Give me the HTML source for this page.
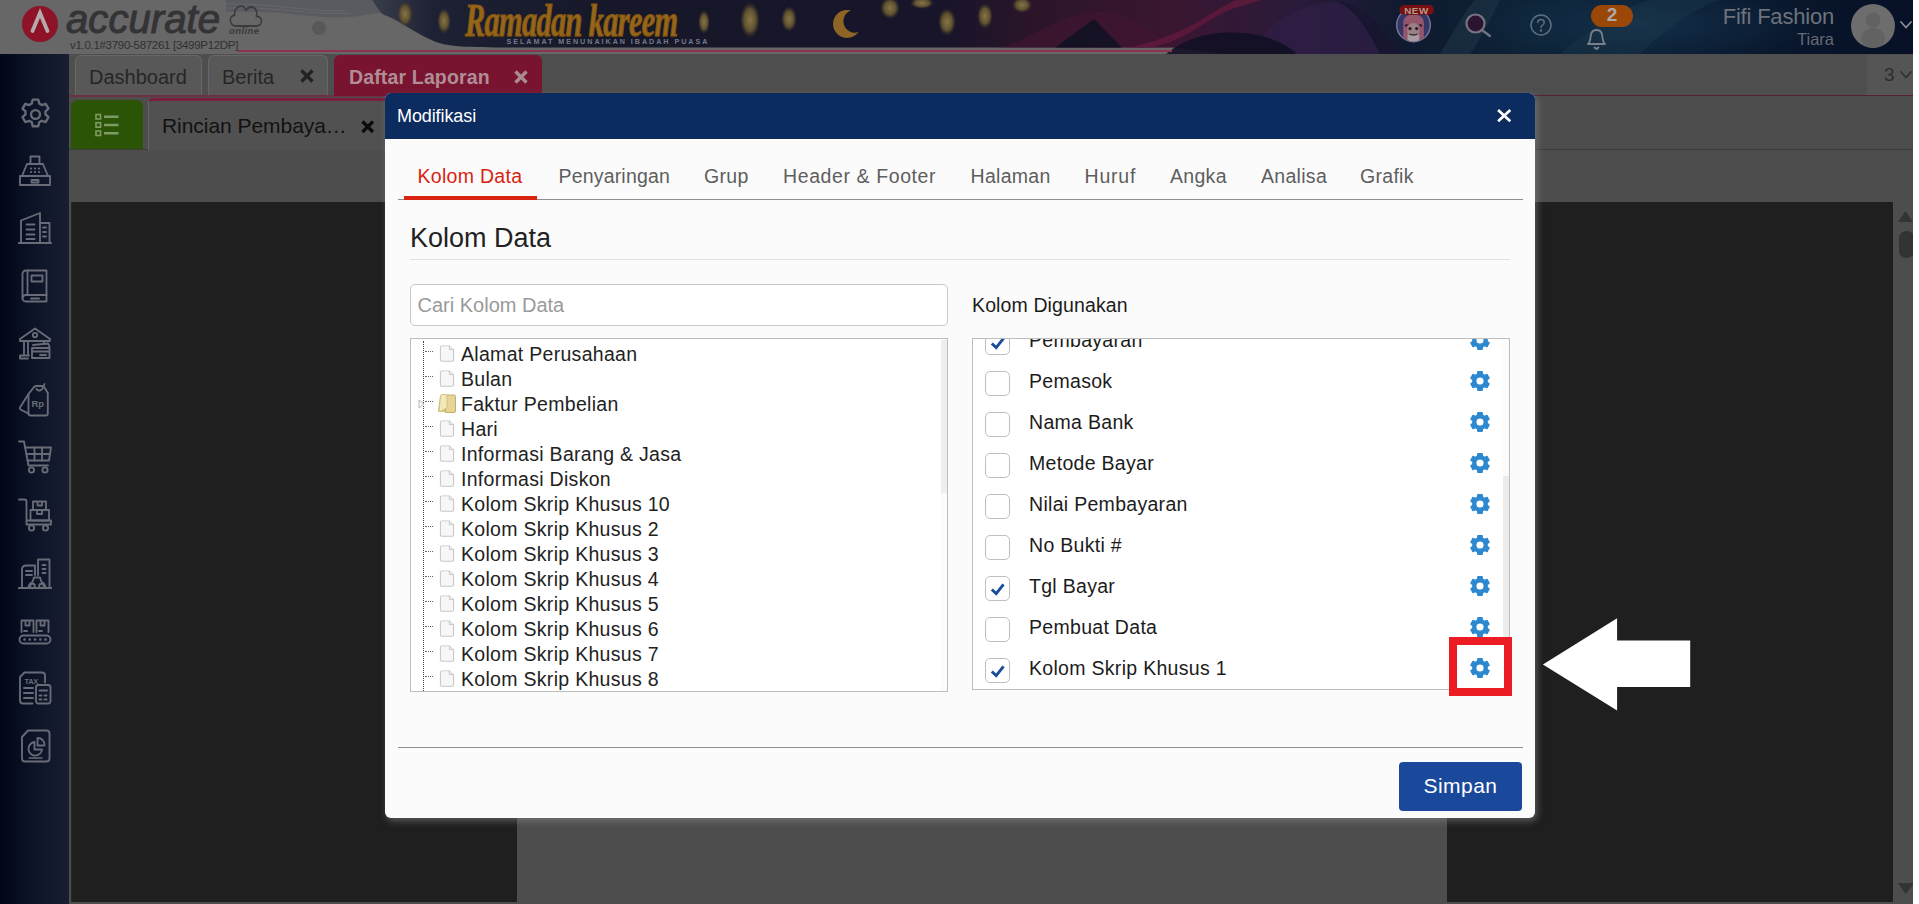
<!DOCTYPE html>
<html lang="id">
<head>
<meta charset="utf-8">
<title>Accurate Online - Modifikasi</title>
<style>
*{box-sizing:border-box;margin:0;padding:0}
html,body{width:1919px;height:904px;overflow:hidden;background:#4d4d4d;font-family:"Liberation Sans",sans-serif;}
.abs{position:absolute}
#root{position:relative;width:1919px;height:904px;overflow:hidden;background:#4d4d4d}
/* ---------- top header ---------- */
#hdr{left:0;top:0;width:1913px;height:54px;background:#676767;overflow:hidden}
#whitestrip{left:1913px;top:0;width:6px;height:904px;background:#fff}
/* ---------- sidebar ---------- */
#side{left:0;top:54px;width:69px;height:850px;background:linear-gradient(90deg,#010718 0%,#0b1326 45%,#191e31 100%)}
#side svg{position:absolute;left:18px;width:34px;height:34px;fill:none;stroke:#696c76;stroke-width:1.85;stroke-linecap:round;stroke-linejoin:round}
/* ---------- tab bar ---------- */
#tabbar{left:69px;top:54px;width:1844px;height:42px;background:#4e4e4e}
.tab{position:absolute;top:55px;height:40px;border:1px solid #676767;border-bottom:none;border-radius:6px 6px 0 0;background:#585858;color:#262626;font-size:20px;line-height:42px;white-space:nowrap}
/* ---------- modal ---------- */
#modal{left:385px;top:93px;width:1150px;height:725px;background:#fbfbfb;border-radius:6px;box-shadow:2px 3px 7px rgba(150,150,150,.5);overflow:hidden}
#mhead{left:0;top:0;width:1150px;height:46px;background:#0c2b5e}
.mt{position:absolute;top:72px;font-size:19.5px;color:#5e5e5e;white-space:nowrap;letter-spacing:.3px}
.ti{position:absolute;left:76px;font-size:19.5px;color:#222;white-space:nowrap;letter-spacing:.3px;line-height:27px;height:25px}
.ri{position:absolute;left:644px;font-size:19.5px;color:#1c1c1c;white-space:nowrap;letter-spacing:.3px;line-height:25px;height:25px}
.cb{position:absolute;left:600px;width:25px;height:25px;border:1px solid #bfbfbf;border-radius:5px;background:#fff}
.gear{position:absolute;left:1084px;width:22px;height:22px}
.pg{position:absolute;left:54px;width:16px;height:17.5px}
</style>
</head>
<body>
<div id="root">
<!--HEADER-S-->
<div id="hdr" class="abs">
<svg class="abs" style="left:0;top:0" width="1913" height="54" viewBox="0 0 1913 54">
  <defs>
    <linearGradient id="gnavy" x1="0" y1="0" x2="1" y2="0">
      <stop offset="0" stop-color="#3a3d4a"/>
      <stop offset="0.04" stop-color="#1d2133"/>
      <stop offset="0.15" stop-color="#161829"/>
      <stop offset="0.37" stop-color="#18142a"/>
      <stop offset="0.43" stop-color="#2b1529"/>
      <stop offset="0.52" stop-color="#3a1631"/>
      <stop offset="0.60" stop-color="#2a1a3a"/>
      <stop offset="0.67" stop-color="#0f1a30"/>
      <stop offset="0.75" stop-color="#0d2236"/>
      <stop offset="0.85" stop-color="#0a1b30"/>
      <stop offset="1" stop-color="#071026"/>
    </linearGradient>
    <linearGradient id="gmag" x1="0" y1="0" x2="1" y2="0">
      <stop offset="0" stop-color="#5a1634" stop-opacity="0.0"/>
      <stop offset="0.25" stop-color="#5e1738" stop-opacity="0.9"/>
      <stop offset="0.7" stop-color="#4a1a48" stop-opacity="0.9"/>
      <stop offset="1" stop-color="#2a1c48" stop-opacity="0.2"/>
    </linearGradient>
    <radialGradient id="gteal" cx="0.5" cy="0.5" r="0.5"><stop offset="0" stop-color="#1c4261" stop-opacity=".5"/><stop offset="0.6" stop-color="#163652" stop-opacity=".25"/><stop offset="1" stop-color="#0d2236" stop-opacity="0"/></radialGradient>
    <radialGradient id="glan" cx="0.5" cy="0.5" r="0.5">
      <stop offset="0" stop-color="#877446"/>
      <stop offset="0.6" stop-color="#5e5030"/>
      <stop offset="1" stop-color="#3a3426" stop-opacity="0"/>
    </radialGradient>
  </defs>
  <rect x="0" y="0" width="1913" height="54" fill="#676767"/>
  <!-- subtle gray wave band at top-left -->
  <path d="M226,0 L400,0 L400,12 C375,12 362,17 340,17.500 C310,18 280,10 226,12 Z" fill="#5a5b60"/>
  <path d="M226,4 C270,3 310,12 345,11 M226,8 C270,6 310,15 350,13.500" fill="none" stroke="#66676c" stroke-width="1"/>
  <!-- navy banner -->
  <path d="M372,0 C378,8 380,13 384,15 C400,20 412,32 436,42 C450,47 470,47.500 520,47.500 L1172,47.500 C1190,49 1210,54 1240,54 L1913,54 L1913,0 Z" fill="url(#gnavy)"/>
  <!-- magenta waves -->
  <path d="M1000,47.500 C1030,40 1060,14 1095,12 C1130,10 1150,30 1172,47.500 Z" fill="#431632" opacity=".6"/>
  <path d="M1055,47.500 L1094,19 L1122,47.500 Z" fill="#0f1022" opacity=".85"/>
  <path d="M1150,47.500 C1190,40 1205,18 1235,8 L1262,0 L1236,0 C1212,10 1190,34 1130,47.500 Z" fill="#661a3e" opacity=".75"/>
  <path d="M1166,54 C1190,34 1225,28 1262,36 C1280,40 1292,48 1300,54 Z" fill="#120f24" opacity=".9"/>
  <path d="M1262,36 C1282,14 1310,2 1338,2 C1366,2 1386,32 1402,54 L1296,54 C1288,46 1276,40 1262,36 Z" fill="#2f1f46" opacity=".7"/>
  <path d="M1338,2 C1366,2 1386,32 1402,54 L1380,54 C1370,34 1356,10 1338,2 Z" fill="#0d1228" opacity=".6"/>
  <!-- teal waves on right -->
  <ellipse cx="1640" cy="24" rx="200" ry="46" fill="url(#gteal)"/>
  <path d="M1560,54 C1590,30 1620,8 1650,0 L1720,0 C1690,10 1660,34 1640,54 Z" fill="#1e3a4c" opacity="0.4"/>
  <path d="M1440,54 C1455,30 1465,10 1475,0 L1500,0 C1490,20 1480,40 1470,54 Z" fill="#22384a" opacity="0.5"/>
  <!-- lanterns -->
  <g fill="url(#glan)">
    <ellipse cx="405" cy="14" rx="8" ry="13"/><ellipse cx="444" cy="21" rx="7" ry="13"/>
    <ellipse cx="750" cy="20" rx="10" ry="18"/><ellipse cx="789" cy="19" rx="8" ry="13"/>
    <ellipse cx="890" cy="8" rx="10" ry="11"/><ellipse cx="947" cy="22" rx="9" ry="14"/>
    <ellipse cx="985" cy="16" rx="8" ry="13"/><ellipse cx="922" cy="3" rx="12" ry="6"/>
    <ellipse cx="704" cy="22" rx="6" ry="12"/><ellipse cx="1022" cy="5" rx="10" ry="8"/>
  </g>
  <!-- crescent -->
  <path d="M851,10.500 A14,14 0 1 0 858.500,32 A11,11 0 1 1 851,10.500 Z" fill="#8f6526"/>
  <!-- bottom light strip + red line -->
  <rect x="238" y="50" width="934" height="2" fill="#8c3350"/>
  <!-- small gray dot -->
  <circle cx="319" cy="28" r="7" fill="#585858"/>
</svg>
<!-- logo -->
<svg class="abs" style="left:20px;top:4px" width="40" height="40" viewBox="0 0 40 40">
  <circle cx="20" cy="20" r="18" fill="#8e1228"/>
  <path d="M12.5,27 L20,9 L27.5,27" fill="none" stroke="#b5aaac" stroke-width="3.8" stroke-linecap="round" stroke-linejoin="miter"/>
</svg>
<div id="acc" class="abs" style="left:66px;top:-8px;font-size:41.5px;font-style:italic;font-weight:normal;color:#343436;-webkit-text-stroke:1.1px #343436;letter-spacing:0px;line-height:54px;transform:scaleX(.968);transform-origin:0 0;white-space:nowrap">accurate</div>
<svg class="abs" style="left:227px;top:3px" width="38" height="24" viewBox="0 2.200 40 19.600" preserveAspectRatio="none" fill="none" stroke="#3b3b3d" stroke-width="1.6">
  <path d="M9,21 C3,21 1,13 8,12 C7,5 17,2 20,8 C25,3 33,6 31,13 C38,13 38,21 31,21 Z"/>
</svg>
<div class="abs" style="left:229px;top:25px;font-size:9.5px;font-style:italic;font-weight:bold;color:#3a3a3c;letter-spacing:.4px">online</div>
<div class="abs" style="left:70px;top:38px;font-size:11.5px;color:#303030;letter-spacing:-.3px;line-height:14px">v1.0.1#3790-587261 [3499P12DP]</div>
<!-- banner text -->
<div class="abs" style="left:465px;top:-3.5px;font-family:'Liberation Serif',serif;font-size:46px;font-style:italic;font-weight:bold;color:#966619;letter-spacing:-1px;line-height:48px;-webkit-text-stroke:1.2px #855715;text-shadow:0 1px 1px #3a2608;transform:scaleX(.66);transform-origin:0 0;white-space:nowrap">Ramadan kareem</div>
<div class="abs" style="left:506.500px;top:36.500px;white-space:nowrap;font-size:7.2px;font-weight:bold;color:#747989;letter-spacing:1.95px;line-height:10px">SELAMAT MENUNAIKAN IBADAH PUASA</div>
<!-- right icons -->
<svg class="abs" style="left:1390px;top:0px" width="50" height="46" viewBox="0 0 50 46">
  <defs><clipPath id="msc"><circle cx="23.500" cy="25" r="16.200"/></clipPath></defs>
  <circle cx="23.500" cy="25" r="16.800" fill="#34376a" stroke="#7c7a92" stroke-width="1.400"/>
  <g clip-path="url(#msc)">
    <path d="M13.200,44 V24 C13.200,17 17,14.500 23.500,14.500 C30,14.500 33.900,17 33.900,24 V44 Z" fill="#93566b"/>
    <ellipse cx="23.400" cy="30.600" rx="6.200" ry="7.600" fill="#9a8186"/>
    <path d="M17.500,34.500 Q23.400,37 29.300,34.500 V44 H17.500 Z" fill="#a79da0"/>
    <circle cx="20" cy="28.600" r="1.600" fill="#2a1c2c"/><circle cx="26.700" cy="28.600" r="1.600" fill="#2a1c2c"/>
    <path d="M19.600,34 Q23.400,35.800 27.400,34" fill="none" stroke="#2a1c2c" stroke-width="1.300"/>
    <path d="M15,26 L17.500,24.500 M32,26 L29.500,24.500" stroke="#1d1830" stroke-width="1.600"/>
  </g>
  <rect x="9.500" y="5" width="34.500" height="9.800" rx="4.900" fill="#7a0f12"/>
  <text x="26.500" y="13.500" font-family="Liberation Sans, sans-serif" font-weight="bold" font-size="9.800" fill="#b39a86" text-anchor="middle" letter-spacing=".6">NEW</text>
</svg>
<svg class="abs" style="left:1462px;top:10px" width="32" height="32" viewBox="0 0 32 32" fill="none" stroke="#767383" stroke-width="2.200" stroke-linecap="round">
  <circle cx="13.500" cy="13.500" r="9" fill="#2a1430"/><path d="M20.500,20.500 L28,26"/>
</svg>
<svg class="abs" style="left:1528px;top:12px" width="26" height="26" viewBox="0 0 26 26" fill="none" stroke="#5f6f7c" stroke-width="1.500" stroke-linecap="round">
  <circle cx="13" cy="13" r="10"/><path d="M9.800,10.500 C9.800,6.500 16.200,6.500 16.200,10.500 C16.200,13 13,13 13,15.500"/><circle cx="13" cy="18.600" r=".5" fill="#5f6f7c"/>
</svg>
<div class="abs" style="left:1591px;top:5px;width:42px;height:22px;border-radius:11px;background:#9a4708"></div>
<div class="abs" style="left:1591px;top:4px;width:42px;height:22px;text-align:center;font-size:19px;font-weight:bold;color:#b0a9a4;line-height:22px">2</div>
<svg class="abs" style="left:1585px;top:27px" width="24" height="24" viewBox="0 0 24 24" fill="none" stroke="#78808c" stroke-width="1.800" stroke-linecap="round" stroke-linejoin="round">
  <path d="M3,17 C6,15 5,9 6.500,6 C8,2 15,2 16.500,6 C18,9 17,15 20,17 Z"/><path d="M9.500,20.500 L11.500,22 L13.500,20.500"/>
</svg>
<div class="abs" style="right:79px;top:4px;font-size:22px;color:#6c737c;white-space:nowrap;line-height:26px;letter-spacing:-.2px">Fifi Fashion</div>
<div class="abs" style="right:79px;top:29px;font-size:16.500px;color:#646a72;white-space:nowrap;line-height:20px">Tiara</div>
<svg class="abs" style="left:1850px;top:3px" width="46" height="46" viewBox="0 0 46 46">
  <defs><clipPath id="avc"><circle cx="23" cy="23" r="22"/></clipPath></defs>
  <circle cx="23" cy="23" r="22" fill="#6d6d6d"/>
  <g clip-path="url(#avc)" fill="#626262"><circle cx="23" cy="17" r="7.500"/><ellipse cx="23" cy="35" rx="12" ry="10"/></g>
</svg>
<svg class="abs" style="left:1899px;top:19px" width="14" height="12" viewBox="0 0 14 12" fill="none" stroke="#8a8f98" stroke-width="1.800" stroke-linecap="round" stroke-linejoin="round"><path d="M2,3 L7,8.500 L12,3"/></svg>
</div>
<div id="whitestrip" class="abs"></div>
<!--HEADER-E-->
<!--TABBAR-S-->
<div id="tabbar" class="abs"></div>
<div class="abs" style="left:69px;top:96px;width:1844px;height:54px;background:#4d4d4d"></div>
<div class="abs" style="left:69px;top:150px;width:1844px;height:52px;background:#4d4d4d"></div>
<div class="abs" style="left:69px;top:95px;width:472px;height:2px;background:#6e3040"></div>
<div class="abs" style="left:541px;top:95px;width:1372px;height:1px;background:#58222c"></div>
<div class="abs" style="left:69px;top:149px;width:1844px;height:1px;background:#3c3c3c"></div>
<div class="tab" style="left:75px;width:127px;padding-left:13px">Dashboard</div>
<div class="tab" style="left:208px;width:120px;padding-left:13px">Berita</div>
<svg class="abs" style="left:299px;top:68px" width="16" height="16" viewBox="0 0 16 16" stroke="#222" stroke-width="3.400" stroke-linecap="butt"><path d="M2.500,2.500 L13.500,13.500 M13.500,2.500 L2.500,13.500"/></svg>
<div class="tab" style="left:334px;width:208px;padding-left:14px;background:#78142f;border-color:#78142f;color:#b08d97;font-weight:bold;font-size:19.5px;letter-spacing:.15px;top:55px;height:41px">Daftar Laporan</div>
<svg class="abs" style="left:513px;top:69px" width="16" height="16" viewBox="0 0 16 16" stroke="#ab8b93" stroke-width="3.400"><path d="M2.500,2.500 L13.500,13.500 M13.500,2.500 L2.500,13.500"/></svg>
<div class="abs" style="left:1867px;top:55px;width:46px;height:40px;background:#555"></div>
<div class="abs" style="left:1884px;top:64px;font-size:19px;color:#2d2d2d;line-height:22px">3</div>
<svg class="abs" style="left:1899px;top:69px" width="14" height="12" viewBox="0 0 14 12" fill="none" stroke="#2f2f2f" stroke-width="1.700" stroke-linecap="round" stroke-linejoin="round"><path d="M2,3 L7,8.500 L12,3"/></svg>
<!-- green list button -->
<div class="abs" style="left:71px;top:100px;width:72px;height:49px;background:#2b5407;border-radius:6px 6px 0 0"></div>
<svg class="abs" style="left:94px;top:112px" width="28" height="26" viewBox="0 0 28 26" fill="none" stroke="#7f9a66" stroke-width="1.600">
  <rect x="2" y="2.500" width="4.500" height="4.500"/><rect x="2" y="10.700" width="4.500" height="4.500"/><rect x="2" y="19" width="4.500" height="4.500"/>
  <path d="M10,4.800 H24.500 M10,13 H24.500 M10,21.200 H24.500" stroke-width="2.400"/>
</svg>
<!-- sub tab -->
<div class="abs" style="left:148px;top:98px;width:240px;height:52px;background:#515151;border-top:3px solid #7b1d3c;border-left:1px solid #666;border-radius:5px 0 0 0"></div>
<div class="abs" style="left:162px;top:112px;font-size:21px;color:#111;line-height:28px;white-space:nowrap;letter-spacing:-.05px">Rincian Pembaya…</div>
<svg class="abs" style="left:360px;top:119px" width="16" height="16" viewBox="0 0 16 16" stroke="#0b0b0b" stroke-width="3.200"><path d="M2.500,2.500 L13,13 M13,2.500 L2.500,13"/></svg>
<!-- viewer -->
<div class="abs" style="left:69px;top:202px;width:1824px;height:700px;background:#1f1f1f"></div>
<div class="abs" style="left:69px;top:202px;width:3px;height:700px;background:#262626"></div>
<div class="abs" style="left:517px;top:202px;width:930px;height:700px;background:#4d4d4d"></div>
<div class="abs" style="left:1893px;top:202px;width:20px;height:702px;background:#4d4d4d"></div>
<svg class="abs" style="left:1893px;top:202px" width="20" height="700" viewBox="0 0 20 700">
  <path d="M5,20 L12.500,9 L20,20 Z" fill="#343434"/>
  <rect x="6" y="29" width="15" height="27" rx="7" fill="#333"/>
  <path d="M5,681 L20,681 L20,683 L12.500,692 Z" fill="#343434"/>
</svg>
<!--TABBAR-E-->
<!--CONTENT-->
<!--SIDEBAR-S-->
<div id="side" class="abs">
<!-- gear -->
<svg style="top:42.500px;left:17.500px;width:35px;height:35px" viewBox="0 0 34 34"><g stroke-width="2.300"><path d="M14.300,2.500 h5.400 l.9,3.900 l2.500,1.400 l3.800,-1.200 l2.700,4.700 l-2.900,2.700 v2.900 l2.900,2.700 l-2.700,4.700 l-3.800,-1.200 l-2.500,1.400 l-.9,3.900 h-5.400 l-.9,-3.900 l-2.500,-1.400 l-3.800,1.200 l-2.700,-4.700 l2.900,-2.700 v-2.900 l-2.900,-2.700 l2.700,-4.700 l3.800,1.200 l2.500,-1.400 z"/><circle cx="17" cy="17" r="4.300"/></g></svg>
<!-- fax -->
<svg style="top:100px" viewBox="0 0 34 34"><path d="M12.500,10 V2.500 h9 V10"/><path d="M9,10 h16 l5,12 H4 z"/><path d="M2,22 h30 v9 H2 z"/><path d="M13.500,26 h7 v2.500 h-7 z"/><path d="M13,14.500 h.1 M17,14.500 h.1 M21,14.500 h.1 M13,18 h.1 M17,18 h.1 M21,18 h.1" stroke-width="2.200"/></svg>
<!-- building -->
<svg style="top:157px" viewBox="0 0 34 34"><path d="M3,31 V9.500 L22,2 V31"/><path d="M22,12 h9.500 V31"/><path d="M1,32 H33" stroke-width="2.200"/><path d="M8.500,13.500 h8 M8.500,18.500 h8 M8.500,23.500 h8 M8.500,28 h8 M25,16.500 h3 M25,21 h3 M25,25.500 h3"/></svg>
<!-- book -->
<svg style="top:215px" viewBox="0 0 34 34"><path d="M8,1.500 H28.500 V32.500 H8 C5.500,32.500 4.500,31 4.500,29 V5 C4.500,3 5.500,1.500 8,1.500 Z"/><path d="M9.500,1.500 V26 M4.500,29 C4.500,27 6,26 8,26 H28.500"/><path d="M13.500,6.500 h11 v6 h-11 z"/><path d="M13,29.500 h8" stroke-width="2"/></svg>
<!-- bank -->
<svg style="top:272px" viewBox="0 0 34 34"><path d="M2,13 L17,2.500 L32,13 V15 H2 Z"/><circle cx="17" cy="9" r="2.200"/><path d="M6,15.500 V28 M10,15.500 V28 M26,15.500 V18 M2,32 V29.500 H11 M2,32.500 H10"/><path d="M15,19 l15,-1.500 l1.500,3"/><path d="M14,22 h17.500 v10 H14 z M14,25.500 h17.500 M22,29 h6"/></svg>
<!-- tag Rp -->
<svg style="top:329px" viewBox="0 0 34 34"><path d="M10.500,11 L16,4 Q17,3 18.500,3 H24 Q25.500,3 26.500,4.500 L29.800,10 V30.500 Q29.800,32.500 27.800,32.500 H12.500 Q10.500,32.500 10.500,30.500 Z"/><path d="M10.500,11 L2,24.500 Q1.500,26 3,26.800 L10.500,30.600"/><path d="M18.500,6 C20,8.500 24,8 25,4.500 L26.500,1"/><text x="13.500" y="24" font-family="Liberation Sans, sans-serif" font-size="9.500" font-weight="bold" fill="#696c76" stroke="none">Rp</text></svg>
<!-- cart -->
<svg style="top:386px" viewBox="0 0 34 34"><path d="M1,1.500 h5 L10.500,25.500 H30"/><path d="M7,7.500 H33 L31,20.500 H9.500"/><path d="M8.500,14 H32 M16.500,7.500 V20.500 M24,7.500 V20.500"/><circle cx="13.500" cy="30" r="2.600"/><circle cx="27" cy="30" r="2.600"/></svg>
<!-- trolley -->
<svg style="top:444px" viewBox="0 0 34 34"><path d="M1,1.500 h5.500 c1.500,0 2,1 2,2.500 V26.500 H33 V22.500 H8.500"/><path d="M15,3.500 h13 v8.500 h-13 z M19.500,3.500 v4 h4.500 v-4"/><path d="M12.500,12 h18.500 v10.500 h-18.500 z M19,12 v4 h5 v-4"/><circle cx="13.500" cy="30" r="2.600"/><circle cx="27.500" cy="30" r="2.600"/></svg>
<!-- factory -->
<svg style="top:503px" viewBox="0 0 34 34"><path d="M1,31 H34" stroke-width="2.200"/><path d="M4,31 V12.500 C4,10 6,8.500 8.500,8.500 H17 V18"/><path d="M20,18 V2.500 H31.500 V31"/><path d="M8,14 h6 M8,18 h6 M24.500,8 h3 M24.500,12 h3 M24.500,16 h3"/><path d="M10.500,31 c0,-3 1.500,-5 4,-6 l1.500,-4.500 h6 l1.500,4.500 c2.500,1 4,3 4,6"/><circle cx="14.500" cy="29" r="2.300"/><circle cx="23.500" cy="29" r="2.300"/></svg>
<!-- conveyor -->
<svg style="top:561px" viewBox="0 0 34 34"><path d="M3.500,17 V5.500 H15.500 V17 M7.500,5.500 v5 h4 v-5 M6,16 h3"/><path d="M18.500,17 V5.500 H30.500 V17 M22.500,5.500 v5 h4 v-5 M21,16 h3"/><rect x="1.500" y="20.500" width="31" height="8" rx="4"/><path d="M6.500,24.500 h.1 M11.700,24.500 h.1 M17,24.500 h.1 M22.300,24.500 h.1 M27.500,24.500 h.1" stroke-width="2.600"/></svg>
<!-- tax -->
<svg style="top:617px" viewBox="0 0 34 34"><path d="M14.500,32.500 H5 C3,32.500 2,31.500 2,29.500 V6 L6.500,1.500 H24 C26,1.500 27,2.500 27,4.500 V11.500"/><text x="6.500" y="13" font-family="Liberation Sans, sans-serif" font-size="7.500" font-weight="bold" fill="#696c76" stroke="none" letter-spacing="-.3">TAX</text><path d="M6,17 h9 M6,22 h9 M6,27 h9" stroke-width="2"/><rect x="18" y="14" width="14.500" height="18.500" rx="2.500"/><path d="M21.500,19.500 h7.500 M21.500,24.500 h2 M26.500,24.500 h2 M21.500,28.500 h2 M26.500,28.500 h2"/></svg>
<!-- report -->
<svg style="top:675px" viewBox="0 0 34 34"><path d="M10,1.500 H28.500 C30.500,1.500 31.500,2.500 31.500,4.500 V29.500 C31.500,31.500 30.500,32.500 28.500,32.500 H7 C5,32.500 4,31.500 4,29.500 V8 Z"/><path d="M16.500,13 A6.800,6.800 0 1 0 24,20.500 H16.500 Z"/><path d="M19.500,9 A6.800,6.800 0 0 1 26.500,16.500 H19.500 Z"/><path d="M11,29 h13" stroke-width="1.400"/></svg>
</div>
<div class="abs" style="left:69px;top:202px;width:2px;height:702px;background:#4d4d4d"></div>
<div class="abs" style="left:69px;top:902px;width:1844px;height:2px;background:#4d4d4d"></div>
<!--SIDEBAR-E-->
<!--MODAL-S-->
<div id="modal" class="abs">
<div id="mhead" class="abs"></div>
<div class="abs" style="left:12px;top:11px;font-size:18px;color:#fff;line-height:24px;letter-spacing:-.1px">Modifikasi</div>
<svg class="abs" style="left:1111px;top:15px" width="16" height="16" viewBox="0 0 16 16" stroke="#fff" stroke-width="2.700" stroke-linecap="butt"><path d="M2.100,1.900 L14.300,13.300 M14.300,1.900 L2.100,13.300"/></svg>
<div class="mt" style="left:32.5px;color:#d8230f">Kolom Data</div>
<div class="mt" style="left:173.5px;letter-spacing:.18px">Penyaringan</div>
<div class="mt" style="left:319px">Grup</div>
<div class="mt" style="left:398px;letter-spacing:.6px">Header &amp; Footer</div>
<div class="mt" style="left:585.5px">Halaman</div>
<div class="mt" style="left:699.5px;letter-spacing:.8px">Huruf</div>
<div class="mt" style="left:785px">Angka</div>
<div class="mt" style="left:876px">Analisa</div>
<div class="mt" style="left:975px">Grafik</div>
<div class="abs" style="left:13px;top:106px;width:1125px;height:1px;background:#8f8f8f"></div>
<div class="abs" style="left:19px;top:103px;width:133px;height:4px;background:#d8230f"></div>
<div class="abs" style="left:25px;top:128px;font-size:27px;color:#222;line-height:34px;white-space:nowrap">Kolom Data</div>
<div class="abs" style="left:25px;top:166px;width:1100px;height:1px;background:#e2e2e2"></div>
<div class="abs" style="left:25px;top:191px;width:538px;height:42px;border:1px solid #c8c8c8;border-radius:5px;background:#fff"></div>
<div class="abs" style="left:32.5px;top:199px;font-size:20px;color:#9a9a9a;line-height:26px;white-space:nowrap">Cari Kolom Data</div>
<div class="abs" style="left:25px;top:245px;width:538px;height:354px;border:1px solid #bdbdbd;background:#fff;overflow:hidden">
<div class="abs" style="left:12px;top:2px;width:0;height:350px;border-left:1.5px dotted #444"></div>
<div class="abs" style="left:530px;top:0;width:7px;height:352px;background:#fbfbfb"></div>
<div class="abs" style="left:530px;top:1px;width:6px;height:153px;background:#eeeeee"></div>
</div>
<div class="abs" style="left:40px;top:258.2px;width:8px;height:0;border-top:1px dotted #666"></div>
<svg class="pg" style="top:251.8px" viewBox="0 0 17 21" preserveAspectRatio="none"><path d="M3,1 H11 L15.500,5.500 V18 Q15.500,19.500 14,19.500 H3 Q1.500,19.500 1.500,18 V2.500 Q1.500,1 3,1 Z" fill="#f7f7f7" stroke="#c6c6c6" stroke-width="1.100"/><path d="M11,1 V5.500 H15.500" fill="#ececec" stroke="#c6c6c6" stroke-width="1"/></svg>
<div class="ti" style="top:248.2px">Alamat Perusahaan</div>
<div class="abs" style="left:40px;top:283.2px;width:8px;height:0;border-top:1px dotted #666"></div>
<svg class="pg" style="top:276.8px" viewBox="0 0 17 21" preserveAspectRatio="none"><path d="M3,1 H11 L15.500,5.500 V18 Q15.500,19.500 14,19.500 H3 Q1.500,19.500 1.500,18 V2.500 Q1.500,1 3,1 Z" fill="#f7f7f7" stroke="#c6c6c6" stroke-width="1.100"/><path d="M11,1 V5.500 H15.500" fill="#ececec" stroke="#c6c6c6" stroke-width="1"/></svg>
<div class="ti" style="top:273.2px">Bulan</div>
<div class="abs" style="left:40px;top:308.2px;width:8px;height:0;border-top:1px dotted #666"></div>
<svg class="abs" style="left:33px;top:305.7px" width="8" height="10" viewBox="0 0 8 10"><path d="M1,1 L6,5 L1,9 Z" fill="#fff" stroke="#b5b5b5" stroke-width="1"/></svg>
<svg class="abs" style="left:52px;top:299.7px" width="20" height="21" viewBox="0 0 20 21"><path d="M1,17 L3,3 Q3.500,1.500 5,1.500 H9 V19 H2 Q.8,19 1,17 Z" fill="#d6c47c"/><path d="M8.500,3.500 Q8.500,2 10,2 H17 Q18.500,2 18.500,3.500 V18 Q18.500,19.500 17,19.500 H8.500 Z" fill="#e6d596" stroke="#bca95e" stroke-width=".9"/><path d="M3.500,3 Q4,1.500 5.500,1.500 H9 Q10,1.500 10,3 V15 L2,19 Z" fill="#f2e9bd" stroke="#c9b872" stroke-width=".7"/></svg>
<div class="ti" style="top:298.2px">Faktur Pembelian</div>
<div class="abs" style="left:40px;top:333.2px;width:8px;height:0;border-top:1px dotted #666"></div>
<svg class="pg" style="top:326.8px" viewBox="0 0 17 21" preserveAspectRatio="none"><path d="M3,1 H11 L15.500,5.500 V18 Q15.500,19.500 14,19.500 H3 Q1.500,19.500 1.500,18 V2.500 Q1.500,1 3,1 Z" fill="#f7f7f7" stroke="#c6c6c6" stroke-width="1.100"/><path d="M11,1 V5.500 H15.500" fill="#ececec" stroke="#c6c6c6" stroke-width="1"/></svg>
<div class="ti" style="top:323.2px">Hari</div>
<div class="abs" style="left:40px;top:358.2px;width:8px;height:0;border-top:1px dotted #666"></div>
<svg class="pg" style="top:351.8px" viewBox="0 0 17 21" preserveAspectRatio="none"><path d="M3,1 H11 L15.500,5.500 V18 Q15.500,19.500 14,19.500 H3 Q1.500,19.500 1.500,18 V2.500 Q1.500,1 3,1 Z" fill="#f7f7f7" stroke="#c6c6c6" stroke-width="1.100"/><path d="M11,1 V5.500 H15.500" fill="#ececec" stroke="#c6c6c6" stroke-width="1"/></svg>
<div class="ti" style="top:348.2px">Informasi Barang &amp; Jasa</div>
<div class="abs" style="left:40px;top:383.2px;width:8px;height:0;border-top:1px dotted #666"></div>
<svg class="pg" style="top:376.8px" viewBox="0 0 17 21" preserveAspectRatio="none"><path d="M3,1 H11 L15.500,5.500 V18 Q15.500,19.500 14,19.500 H3 Q1.500,19.500 1.500,18 V2.500 Q1.500,1 3,1 Z" fill="#f7f7f7" stroke="#c6c6c6" stroke-width="1.100"/><path d="M11,1 V5.500 H15.500" fill="#ececec" stroke="#c6c6c6" stroke-width="1"/></svg>
<div class="ti" style="top:373.2px">Informasi Diskon</div>
<div class="abs" style="left:40px;top:408.2px;width:8px;height:0;border-top:1px dotted #666"></div>
<svg class="pg" style="top:401.8px" viewBox="0 0 17 21" preserveAspectRatio="none"><path d="M3,1 H11 L15.500,5.500 V18 Q15.500,19.500 14,19.500 H3 Q1.500,19.500 1.500,18 V2.500 Q1.500,1 3,1 Z" fill="#f7f7f7" stroke="#c6c6c6" stroke-width="1.100"/><path d="M11,1 V5.500 H15.500" fill="#ececec" stroke="#c6c6c6" stroke-width="1"/></svg>
<div class="ti" style="top:398.2px">Kolom Skrip Khusus 10</div>
<div class="abs" style="left:40px;top:433.2px;width:8px;height:0;border-top:1px dotted #666"></div>
<svg class="pg" style="top:426.8px" viewBox="0 0 17 21" preserveAspectRatio="none"><path d="M3,1 H11 L15.500,5.500 V18 Q15.500,19.500 14,19.500 H3 Q1.500,19.500 1.500,18 V2.500 Q1.500,1 3,1 Z" fill="#f7f7f7" stroke="#c6c6c6" stroke-width="1.100"/><path d="M11,1 V5.500 H15.500" fill="#ececec" stroke="#c6c6c6" stroke-width="1"/></svg>
<div class="ti" style="top:423.2px">Kolom Skrip Khusus 2</div>
<div class="abs" style="left:40px;top:458.2px;width:8px;height:0;border-top:1px dotted #666"></div>
<svg class="pg" style="top:451.8px" viewBox="0 0 17 21" preserveAspectRatio="none"><path d="M3,1 H11 L15.500,5.500 V18 Q15.500,19.500 14,19.500 H3 Q1.500,19.500 1.500,18 V2.500 Q1.500,1 3,1 Z" fill="#f7f7f7" stroke="#c6c6c6" stroke-width="1.100"/><path d="M11,1 V5.500 H15.500" fill="#ececec" stroke="#c6c6c6" stroke-width="1"/></svg>
<div class="ti" style="top:448.2px">Kolom Skrip Khusus 3</div>
<div class="abs" style="left:40px;top:483.2px;width:8px;height:0;border-top:1px dotted #666"></div>
<svg class="pg" style="top:476.8px" viewBox="0 0 17 21" preserveAspectRatio="none"><path d="M3,1 H11 L15.500,5.500 V18 Q15.500,19.500 14,19.500 H3 Q1.500,19.500 1.500,18 V2.500 Q1.500,1 3,1 Z" fill="#f7f7f7" stroke="#c6c6c6" stroke-width="1.100"/><path d="M11,1 V5.500 H15.500" fill="#ececec" stroke="#c6c6c6" stroke-width="1"/></svg>
<div class="ti" style="top:473.2px">Kolom Skrip Khusus 4</div>
<div class="abs" style="left:40px;top:508.2px;width:8px;height:0;border-top:1px dotted #666"></div>
<svg class="pg" style="top:501.8px" viewBox="0 0 17 21" preserveAspectRatio="none"><path d="M3,1 H11 L15.500,5.500 V18 Q15.500,19.500 14,19.500 H3 Q1.500,19.500 1.500,18 V2.500 Q1.500,1 3,1 Z" fill="#f7f7f7" stroke="#c6c6c6" stroke-width="1.100"/><path d="M11,1 V5.500 H15.500" fill="#ececec" stroke="#c6c6c6" stroke-width="1"/></svg>
<div class="ti" style="top:498.2px">Kolom Skrip Khusus 5</div>
<div class="abs" style="left:40px;top:533.2px;width:8px;height:0;border-top:1px dotted #666"></div>
<svg class="pg" style="top:526.8px" viewBox="0 0 17 21" preserveAspectRatio="none"><path d="M3,1 H11 L15.500,5.500 V18 Q15.500,19.500 14,19.500 H3 Q1.500,19.500 1.500,18 V2.500 Q1.500,1 3,1 Z" fill="#f7f7f7" stroke="#c6c6c6" stroke-width="1.100"/><path d="M11,1 V5.500 H15.500" fill="#ececec" stroke="#c6c6c6" stroke-width="1"/></svg>
<div class="ti" style="top:523.2px">Kolom Skrip Khusus 6</div>
<div class="abs" style="left:40px;top:558.2px;width:8px;height:0;border-top:1px dotted #666"></div>
<svg class="pg" style="top:551.8px" viewBox="0 0 17 21" preserveAspectRatio="none"><path d="M3,1 H11 L15.500,5.500 V18 Q15.500,19.500 14,19.500 H3 Q1.500,19.500 1.500,18 V2.500 Q1.500,1 3,1 Z" fill="#f7f7f7" stroke="#c6c6c6" stroke-width="1.100"/><path d="M11,1 V5.500 H15.500" fill="#ececec" stroke="#c6c6c6" stroke-width="1"/></svg>
<div class="ti" style="top:548.2px">Kolom Skrip Khusus 7</div>
<div class="abs" style="left:40px;top:583.2px;width:8px;height:0;border-top:1px dotted #666"></div>
<svg class="pg" style="top:576.8px" viewBox="0 0 17 21" preserveAspectRatio="none"><path d="M3,1 H11 L15.500,5.500 V18 Q15.500,19.500 14,19.500 H3 Q1.500,19.500 1.500,18 V2.500 Q1.500,1 3,1 Z" fill="#f7f7f7" stroke="#c6c6c6" stroke-width="1.100"/><path d="M11,1 V5.500 H15.500" fill="#ececec" stroke="#c6c6c6" stroke-width="1"/></svg>
<div class="ti" style="top:573.2px">Kolom Skrip Khusus 8</div>
<div class="abs" style="left:587px;top:199px;font-size:19.5px;color:#1c1c1c;line-height:26px;white-space:nowrap;letter-spacing:.12px">Kolom Digunakan</div>
<div class="abs" style="left:587px;top:245px;width:538px;height:352px;border:1px solid #bdbdbd;background:#fff;overflow:hidden">
<div class="abs" style="left:530px;top:0;width:7px;height:350px;background:#fbfbfb"></div>
<div class="abs" style="left:530px;top:137px;width:6px;height:214px;background:#ececec"></div>
<div class="cb" style="left:12px;top:-9.2px"></div>
<svg class="abs" style="left:12px;top:-9.2px" width="25" height="25" viewBox="0 0 25 25" fill="none" stroke="#1a4c9c" stroke-width="2.900" stroke-linecap="butt" stroke-linejoin="miter"><path d="M6.800,13.500 L11.200,17.600 L18.500,8.400"/></svg>
<div class="ri" style="left:56px;top:-11.2px">Pembayaran</div>
<svg class="gear"  style="left:496px;top:-9.7px" viewBox="0 0 24 24"><path fill="#2d88cf" fill-rule="evenodd" stroke="#2d88cf" stroke-width="1.2" stroke-linejoin="round" d="M9.13,4.53 L9.62,1.67 L14.38,1.67 L14.87,4.53 L17.03,5.78 L19.75,4.77 L22.14,8.90 L19.90,10.75 L19.90,13.25 L22.14,15.10 L19.75,19.23 L17.03,18.22 L14.87,19.47 L14.38,22.33 L9.62,22.33 L9.13,19.47 L6.97,18.22 L4.25,19.23 L1.86,15.10 L4.10,13.25 L4.10,10.75 L1.86,8.90 L4.25,4.77 L6.97,5.78 Z M7.50,12.00 a4.5,4.5 0 1,0 9.0,0 a4.5,4.5 0 1,0 -9.0,0 Z"/></svg>
<div class="cb" style="left:12px;top:31.8px"></div>
<div class="ri" style="left:56px;top:29.8px">Pemasok</div>
<svg class="gear"  style="left:496px;top:31.3px" viewBox="0 0 24 24"><path fill="#2d88cf" fill-rule="evenodd" stroke="#2d88cf" stroke-width="1.2" stroke-linejoin="round" d="M9.13,4.53 L9.62,1.67 L14.38,1.67 L14.87,4.53 L17.03,5.78 L19.75,4.77 L22.14,8.90 L19.90,10.75 L19.90,13.25 L22.14,15.10 L19.75,19.23 L17.03,18.22 L14.87,19.47 L14.38,22.33 L9.62,22.33 L9.13,19.47 L6.97,18.22 L4.25,19.23 L1.86,15.10 L4.10,13.25 L4.10,10.75 L1.86,8.90 L4.25,4.77 L6.97,5.78 Z M7.50,12.00 a4.5,4.5 0 1,0 9.0,0 a4.5,4.5 0 1,0 -9.0,0 Z"/></svg>
<div class="cb" style="left:12px;top:72.8px"></div>
<div class="ri" style="left:56px;top:70.8px">Nama Bank</div>
<svg class="gear"  style="left:496px;top:72.3px" viewBox="0 0 24 24"><path fill="#2d88cf" fill-rule="evenodd" stroke="#2d88cf" stroke-width="1.2" stroke-linejoin="round" d="M9.13,4.53 L9.62,1.67 L14.38,1.67 L14.87,4.53 L17.03,5.78 L19.75,4.77 L22.14,8.90 L19.90,10.75 L19.90,13.25 L22.14,15.10 L19.75,19.23 L17.03,18.22 L14.87,19.47 L14.38,22.33 L9.62,22.33 L9.13,19.47 L6.97,18.22 L4.25,19.23 L1.86,15.10 L4.10,13.25 L4.10,10.75 L1.86,8.90 L4.25,4.77 L6.97,5.78 Z M7.50,12.00 a4.5,4.5 0 1,0 9.0,0 a4.5,4.5 0 1,0 -9.0,0 Z"/></svg>
<div class="cb" style="left:12px;top:113.8px"></div>
<div class="ri" style="left:56px;top:111.8px">Metode Bayar</div>
<svg class="gear"  style="left:496px;top:113.3px" viewBox="0 0 24 24"><path fill="#2d88cf" fill-rule="evenodd" stroke="#2d88cf" stroke-width="1.2" stroke-linejoin="round" d="M9.13,4.53 L9.62,1.67 L14.38,1.67 L14.87,4.53 L17.03,5.78 L19.75,4.77 L22.14,8.90 L19.90,10.75 L19.90,13.25 L22.14,15.10 L19.75,19.23 L17.03,18.22 L14.87,19.47 L14.38,22.33 L9.62,22.33 L9.13,19.47 L6.97,18.22 L4.25,19.23 L1.86,15.10 L4.10,13.25 L4.10,10.75 L1.86,8.90 L4.25,4.77 L6.97,5.78 Z M7.50,12.00 a4.5,4.5 0 1,0 9.0,0 a4.5,4.5 0 1,0 -9.0,0 Z"/></svg>
<div class="cb" style="left:12px;top:154.8px"></div>
<div class="ri" style="left:56px;top:152.8px">Nilai Pembayaran</div>
<svg class="gear"  style="left:496px;top:154.3px" viewBox="0 0 24 24"><path fill="#2d88cf" fill-rule="evenodd" stroke="#2d88cf" stroke-width="1.2" stroke-linejoin="round" d="M9.13,4.53 L9.62,1.67 L14.38,1.67 L14.87,4.53 L17.03,5.78 L19.75,4.77 L22.14,8.90 L19.90,10.75 L19.90,13.25 L22.14,15.10 L19.75,19.23 L17.03,18.22 L14.87,19.47 L14.38,22.33 L9.62,22.33 L9.13,19.47 L6.97,18.22 L4.25,19.23 L1.86,15.10 L4.10,13.25 L4.10,10.75 L1.86,8.90 L4.25,4.77 L6.97,5.78 Z M7.50,12.00 a4.5,4.5 0 1,0 9.0,0 a4.5,4.5 0 1,0 -9.0,0 Z"/></svg>
<div class="cb" style="left:12px;top:195.8px"></div>
<div class="ri" style="left:56px;top:193.8px">No Bukti #</div>
<svg class="gear"  style="left:496px;top:195.3px" viewBox="0 0 24 24"><path fill="#2d88cf" fill-rule="evenodd" stroke="#2d88cf" stroke-width="1.2" stroke-linejoin="round" d="M9.13,4.53 L9.62,1.67 L14.38,1.67 L14.87,4.53 L17.03,5.78 L19.75,4.77 L22.14,8.90 L19.90,10.75 L19.90,13.25 L22.14,15.10 L19.75,19.23 L17.03,18.22 L14.87,19.47 L14.38,22.33 L9.62,22.33 L9.13,19.47 L6.97,18.22 L4.25,19.23 L1.86,15.10 L4.10,13.25 L4.10,10.75 L1.86,8.90 L4.25,4.77 L6.97,5.78 Z M7.50,12.00 a4.5,4.5 0 1,0 9.0,0 a4.5,4.5 0 1,0 -9.0,0 Z"/></svg>
<div class="cb" style="left:12px;top:236.8px"></div>
<svg class="abs" style="left:12px;top:236.8px" width="25" height="25" viewBox="0 0 25 25" fill="none" stroke="#1a4c9c" stroke-width="2.900" stroke-linecap="butt" stroke-linejoin="miter"><path d="M6.800,13.500 L11.200,17.600 L18.500,8.400"/></svg>
<div class="ri" style="left:56px;top:234.8px">Tgl Bayar</div>
<svg class="gear"  style="left:496px;top:236.3px" viewBox="0 0 24 24"><path fill="#2d88cf" fill-rule="evenodd" stroke="#2d88cf" stroke-width="1.2" stroke-linejoin="round" d="M9.13,4.53 L9.62,1.67 L14.38,1.67 L14.87,4.53 L17.03,5.78 L19.75,4.77 L22.14,8.90 L19.90,10.75 L19.90,13.25 L22.14,15.10 L19.75,19.23 L17.03,18.22 L14.87,19.47 L14.38,22.33 L9.62,22.33 L9.13,19.47 L6.97,18.22 L4.25,19.23 L1.86,15.10 L4.10,13.25 L4.10,10.75 L1.86,8.90 L4.25,4.77 L6.97,5.78 Z M7.50,12.00 a4.5,4.5 0 1,0 9.0,0 a4.5,4.5 0 1,0 -9.0,0 Z"/></svg>
<div class="cb" style="left:12px;top:277.8px"></div>
<div class="ri" style="left:56px;top:275.8px">Pembuat Data</div>
<svg class="gear"  style="left:496px;top:277.3px" viewBox="0 0 24 24"><path fill="#2d88cf" fill-rule="evenodd" stroke="#2d88cf" stroke-width="1.2" stroke-linejoin="round" d="M9.13,4.53 L9.62,1.67 L14.38,1.67 L14.87,4.53 L17.03,5.78 L19.75,4.77 L22.14,8.90 L19.90,10.75 L19.90,13.25 L22.14,15.10 L19.75,19.23 L17.03,18.22 L14.87,19.47 L14.38,22.33 L9.62,22.33 L9.13,19.47 L6.97,18.22 L4.25,19.23 L1.86,15.10 L4.10,13.25 L4.10,10.75 L1.86,8.90 L4.25,4.77 L6.97,5.78 Z M7.50,12.00 a4.5,4.5 0 1,0 9.0,0 a4.5,4.5 0 1,0 -9.0,0 Z"/></svg>
<div class="cb" style="left:12px;top:318.8px"></div>
<svg class="abs" style="left:12px;top:318.8px" width="25" height="25" viewBox="0 0 25 25" fill="none" stroke="#1a4c9c" stroke-width="2.900" stroke-linecap="butt" stroke-linejoin="miter"><path d="M6.800,13.500 L11.200,17.600 L18.500,8.400"/></svg>
<div class="ri" style="left:56px;top:316.8px">Kolom Skrip Khusus 1</div>
<svg class="gear"  style="left:496px;top:318.3px" viewBox="0 0 24 24"><path fill="#2d88cf" fill-rule="evenodd" stroke="#2d88cf" stroke-width="1.2" stroke-linejoin="round" d="M9.13,4.53 L9.62,1.67 L14.38,1.67 L14.87,4.53 L17.03,5.78 L19.75,4.77 L22.14,8.90 L19.90,10.75 L19.90,13.25 L22.14,15.10 L19.75,19.23 L17.03,18.22 L14.87,19.47 L14.38,22.33 L9.62,22.33 L9.13,19.47 L6.97,18.22 L4.25,19.23 L1.86,15.10 L4.10,13.25 L4.10,10.75 L1.86,8.90 L4.25,4.77 L6.97,5.78 Z M7.50,12.00 a4.5,4.5 0 1,0 9.0,0 a4.5,4.5 0 1,0 -9.0,0 Z"/></svg>
</div>
<div class="abs" style="left:13px;top:654px;width:1125px;height:1px;background:#8f8f8f"></div>
<div class="abs" style="left:1014px;top:669px;width:123px;height:49px;background:#1a499b;border-radius:4px;color:#fff;font-size:21px;line-height:47.500px;text-align:center;letter-spacing:.45px">Simpan</div>
</div>
<!--MODAL-E-->
<!--ANNOT-S-->
<div class="abs" style="left:1449px;top:637px;width:63px;height:59px;border:8px solid #ec1c24;background:#fff"></div>
<svg class="abs" style="left:1469px;top:657px;width:22px;height:22px" viewBox="0 0 24 24"><path fill="#2d88cf" fill-rule="evenodd" stroke="#2d88cf" stroke-width="1.2" stroke-linejoin="round" d="M9.13,4.53 L9.62,1.67 L14.38,1.67 L14.87,4.53 L17.03,5.78 L19.75,4.77 L22.14,8.90 L19.90,10.75 L19.90,13.25 L22.14,15.10 L19.75,19.23 L17.03,18.22 L14.87,19.47 L14.38,22.33 L9.62,22.33 L9.13,19.47 L6.97,18.22 L4.25,19.23 L1.86,15.10 L4.10,13.25 L4.10,10.75 L1.86,8.90 L4.25,4.77 L6.97,5.78 Z M7.50,12.00 a4.5,4.5 0 1,0 9.0,0 a4.5,4.5 0 1,0 -9.0,0 Z"/></svg>
<svg class="abs" style="left:1540px;top:615px" width="156" height="100" viewBox="0 0 156 100"><path d="M2.900,49.500 L77.100,3.300 L77.100,25.600 L150.200,25.600 L150.200,72 L77.100,72 L77.100,95.500 Z" fill="#fff"/></svg>
<!--ANNOT-E-->
</div>
</body>
</html>
